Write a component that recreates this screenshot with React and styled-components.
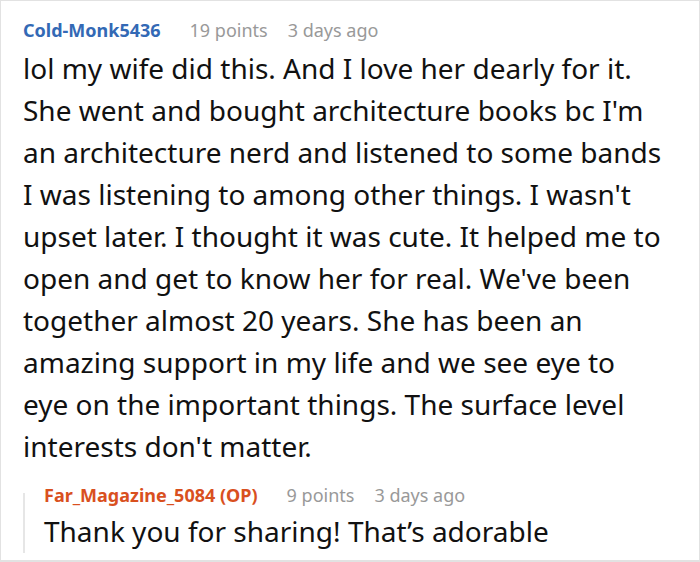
import React from 'react';
import styled, { createGlobalStyle } from 'styled-components';

const GlobalStyle = createGlobalStyle`
  html, body {
    margin: 0;
    padding: 0;
    background: #fff;
  }
  * {
    box-sizing: border-box;
  }
`;

const Card = styled.div`
  width: 700px;
  height: 562px;
  border: 1px solid #e2e2e2;
  border-bottom-width: 2px;
  padding: 17px 22px 0 22px;
  overflow: hidden;
  font-family: 'Noto Sans', 'Open Sans', sans-serif;
`;

const Meta = styled.div`
  display: flex;
  align-items: baseline;
  font-size: 18px;
  line-height: 24px;
  white-space: nowrap;
`;

const Author = styled.span`
  font-weight: 700;
  margin-right: 29px;
  color: ${({ $op }) => ($op ? '#d9501e' : '#3369b5')};
`;

const Muted = styled.span`
  color: #999;
  & + & {
    margin-left: 20px;
  }
`;

const Body = styled.p`
  margin: 5px 0 0;
  font-size: 28px;
  line-height: 42px;
  color: #111;
`;

const Reply = styled.div`
  position: relative;
  margin-top: 16px;
  padding: 0 0 1px 21px;

  &::before {
    content: '';
    position: absolute;
    left: 0;
    top: 10px;
    bottom: 0;
    width: 2px;
    background: #e6e6e6;
  }

  ${Body} {
    margin-top: 3px;
    white-space: nowrap;
  }
`;

const comment = {
  author: 'Cold-Monk5436',
  points: '19 points',
  age: '3 days ago',
  // the original wraps before the second "eye"
  text: [
    "lol my wife did this. And I love her dearly for it. She went and bought architecture books bc I'm an architecture nerd and listened to some bands I was listening to among other things. I wasn't upset later. I thought it was cute. It helped me to open and get to know her for real. We've been together almost 20 years. She has been an amazing support in my life and we see eye to",
    "eye on the important things. The surface level interests don't matter.",
  ],
};

const reply = {
  author: 'Far_Magazine_5084 (OP)',
  points: '9 points',
  age: '3 days ago',
  text: ['Thank you for sharing! That\u2019s adorable'],
};

const Comment = ({ data, op, as: Wrap = React.Fragment }) => (
  <Wrap>
    <Meta>
      <Author $op={op}>{data.author}</Author>
      <Muted>{data.points}</Muted>
      <Muted>{data.age}</Muted>
    </Meta>
    <Body>
      {data.text.map((part, i) => (
        <React.Fragment key={i}>
          {i > 0 && <br />}
          {part}
        </React.Fragment>
      ))}
    </Body>
  </Wrap>
);

export default function App() {
  return (
    <>
      <GlobalStyle />
      <Card>
        <Comment data={comment} />
        <Reply>
          <Comment data={reply} op />
        </Reply>
      </Card>
    </>
  );
}
